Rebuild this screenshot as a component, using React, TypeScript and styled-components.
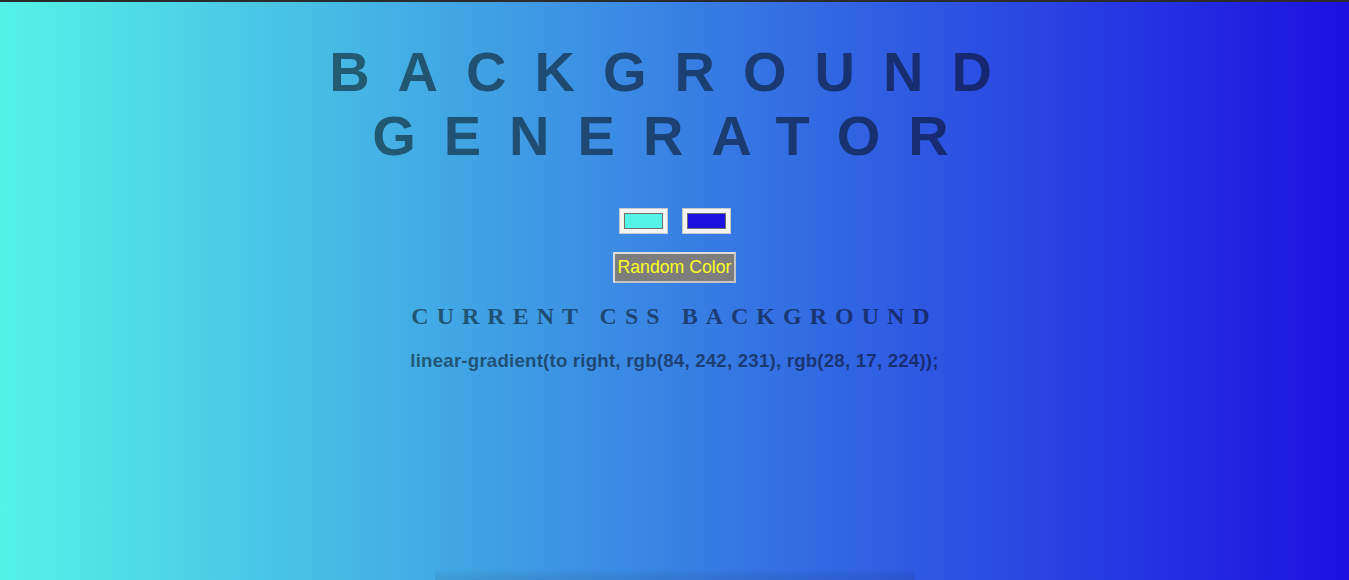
import React, { useState } from "react";
import styled, { createGlobalStyle } from "styled-components";

const GlobalStyle = createGlobalStyle`
  html, body {
    margin: 0;
    padding: 0;
    min-height: 100%;
  }
  body {
    background: linear-gradient(to right, rgb(84, 242, 231), rgb(28, 17, 224));
    background-attachment: fixed;
    min-height: 100vh;
    overflow: hidden;
  }
`;

const TopBar = styled.div`
  height: 2px;
  background: #2b2b2b;
`;

const Page = styled.main`
  display: flex;
  flex-direction: column;
  align-items: center;
  text-align: center;
  color: rgba(0, 0, 0, 0.5);
`;

const Title = styled.h1`
  margin: 38px 0 38px;
  max-width: 1000px;
  font: bold 56px "Liberation Sans", Arial, sans-serif;
  line-height: 64.4px;
  letter-spacing: 0.5em;
  text-transform: uppercase;
  color: rgba(0, 0, 0, 0.5);
`;

const Pickers = styled.div`
  display: flex;
  gap: 14px;
  margin-top: 1px;
`;

const Picker = styled.label`
  box-sizing: border-box;
  width: 49px;
  height: 26px;
  padding: 4px 4px;
  background: #f3f3f3;
  border: 1px solid #c9c9c9;
  display: flex;
`;

const Swatch = styled.span<{ $color: string }>`
  flex: 1;
  background: ${(p) => p.$color};
  border: 1px solid #6f6f6f;
`;

const RandomButton = styled.button`
  margin-top: 18px;
  height: 31px;
  box-sizing: border-box;
  padding: 0 2px;
  font: 17.7px "Liberation Sans", Arial, sans-serif;
  color: #ffff22;
  background: #7d7d7d;
  border: 2px solid #dcdcdc;
  border-right-color: #c4c4c4;
  border-bottom-color: #c4c4c4;
  cursor: pointer;
`;

const Subtitle = styled.h2`
  margin: 20px 0 0;
  font: bold 24px "Liberation Serif", "Times New Roman", serif;
  line-height: 27.6px;
  letter-spacing: 8px;
  text-transform: uppercase;
  color: rgba(0, 0, 0, 0.5);
`;

const CssText = styled.h3`
  margin: 20px 0 0;
  font: bold 18.72px "Liberation Sans", Arial, sans-serif;
  line-height: 21.5px;
  letter-spacing: 0.01em;
  color: rgba(0, 0, 0, 0.5);
`;

const ShadowStrip = styled.div`
  margin-top: 196px;
  width: 480px;
  height: 14px;
  background: linear-gradient(to bottom, rgba(0, 0, 0, 0), rgba(0, 0, 0, 0.1));
`;

export default function App() {
  const [c1] = useState("#54f2e7");
  const [c2] = useState("#1c11e0");
  return (
    <>
      <GlobalStyle />
      <TopBar />
      <Page>
        <Title>Background Generator</Title>
        <Pickers>
          <Picker>
            <Swatch $color={c1} />
          </Picker>
          <Picker>
            <Swatch $color={c2} />
          </Picker>
        </Pickers>
        <RandomButton>Random Color</RandomButton>
        <Subtitle>Current CSS Background</Subtitle>
        <CssText>linear-gradient(to right, rgb(84, 242, 231), rgb(28, 17, 224));</CssText>
        <ShadowStrip />
      </Page>
    </>
  );
}
